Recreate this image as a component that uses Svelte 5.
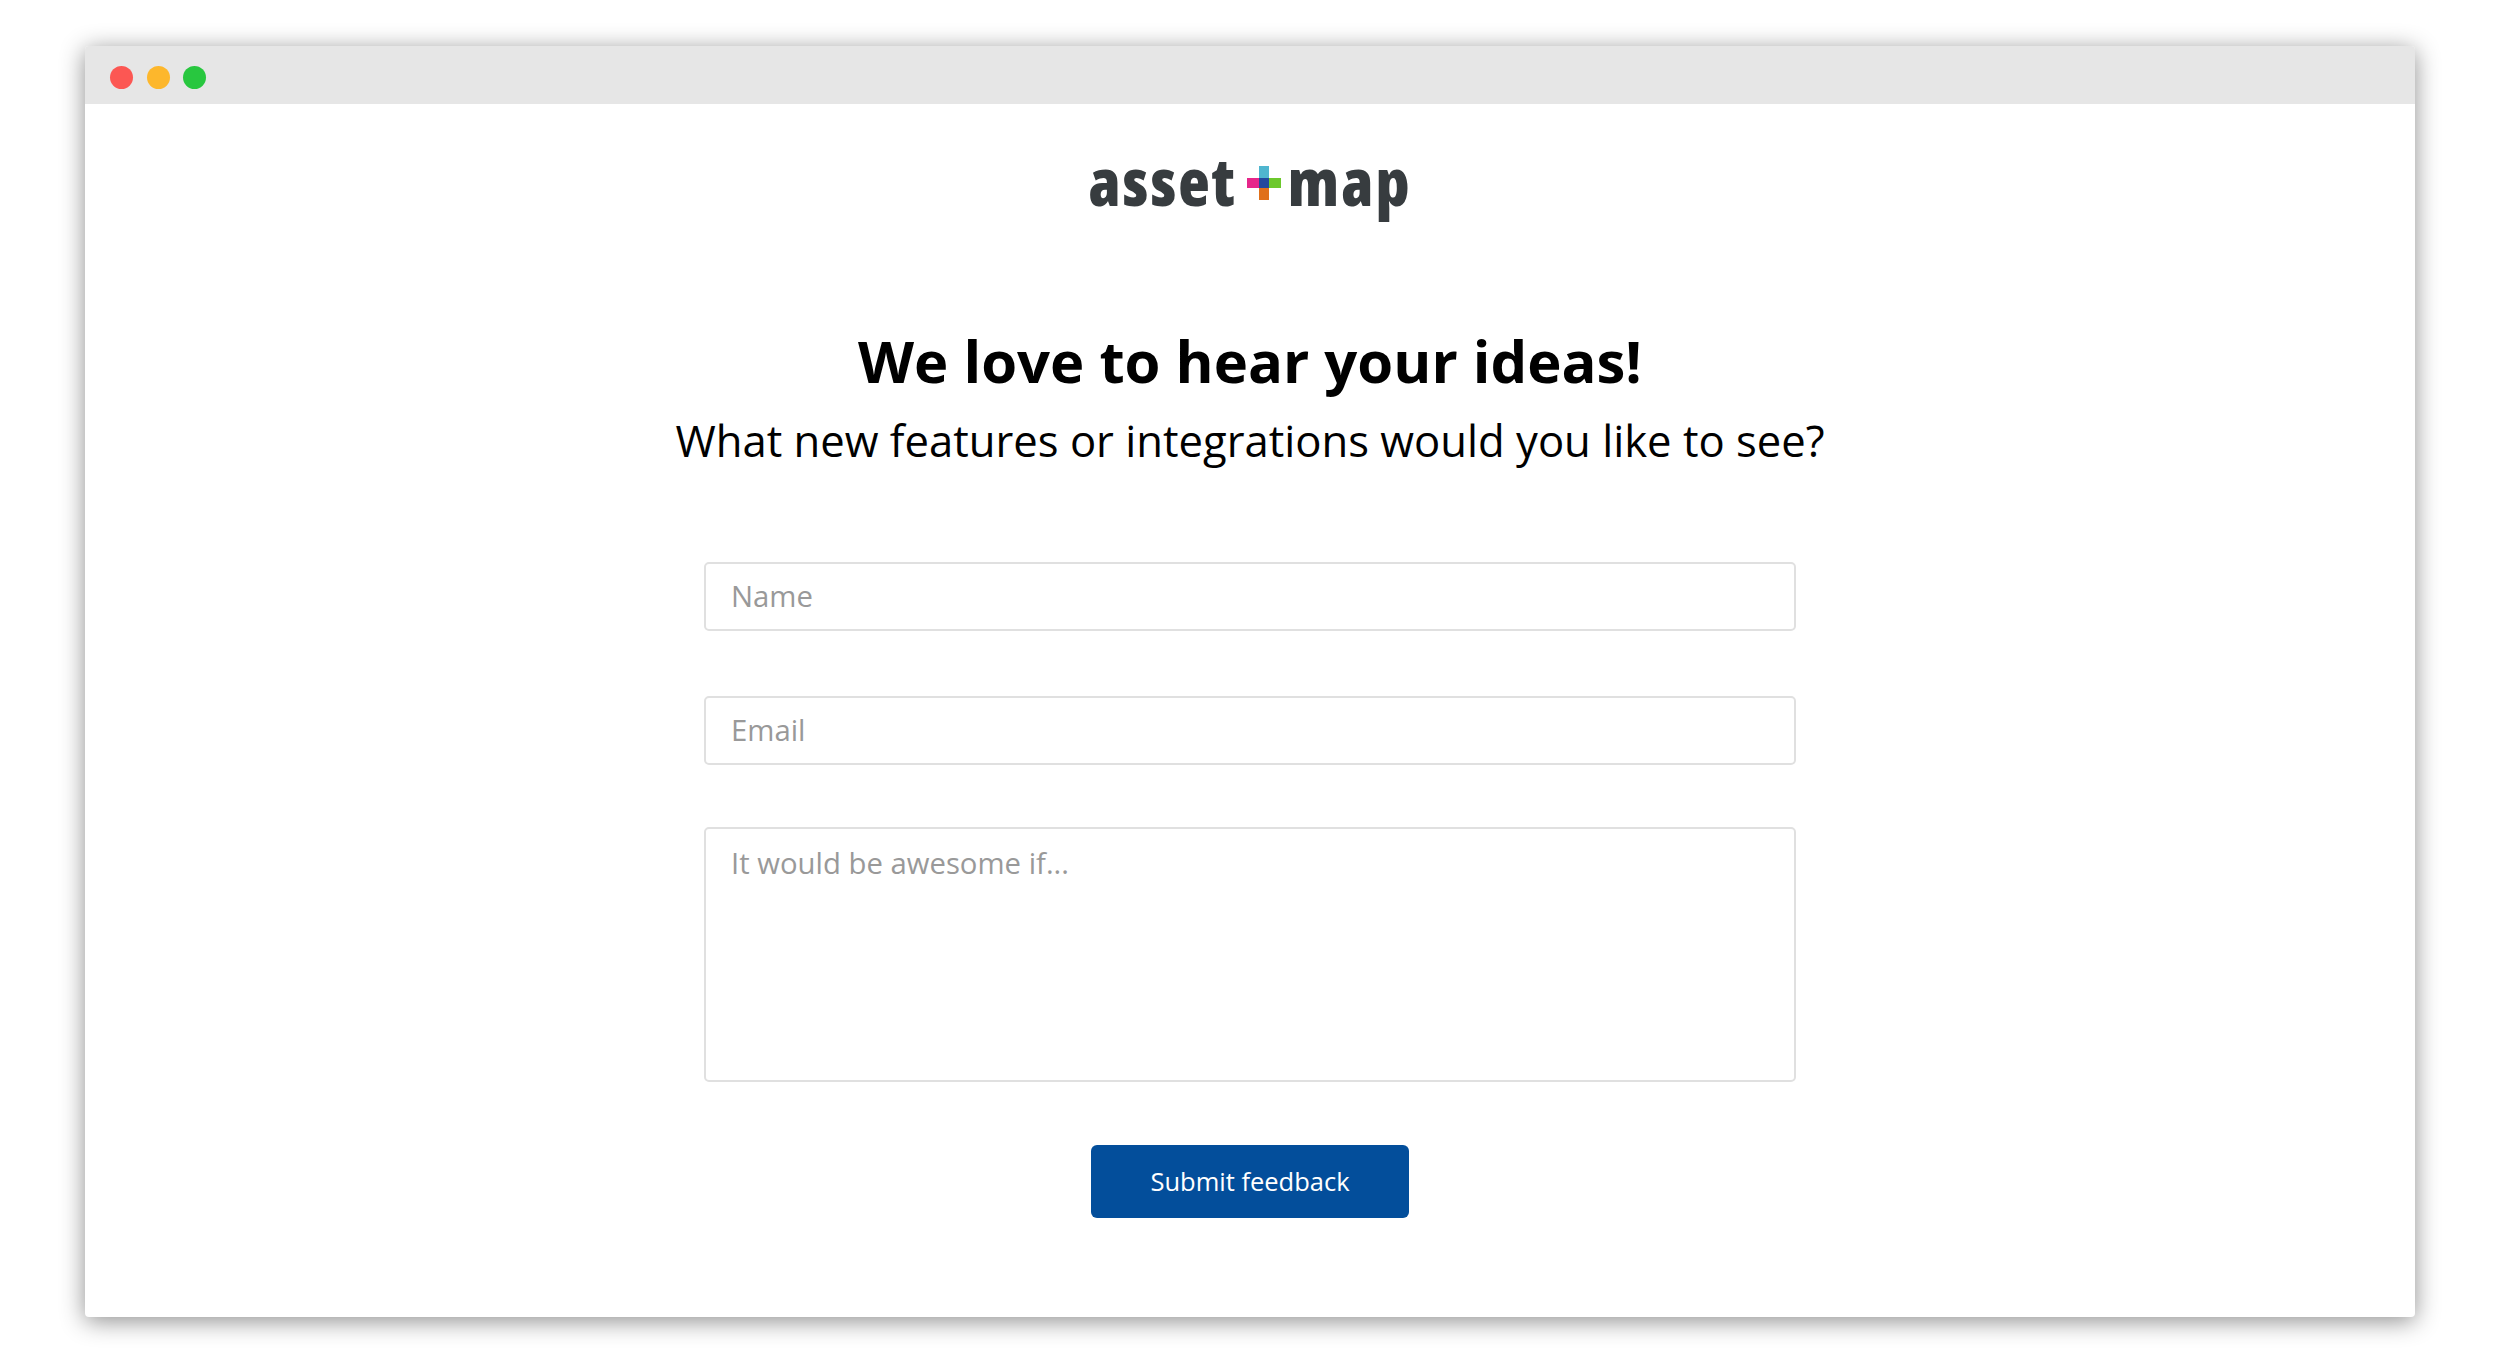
<script lang="ts">
  let name = $state('')
  let email = $state('')
  let idea = $state('')
</script>

<div class="page">
  <div class="window">
    <div class="titlebar">
      <span class="dot red"></span>
      <span class="dot yellow"></span>
      <span class="dot green"></span>
    </div>

    <div class="content">
      <div class="logo">
        <span class="word">asset</span>
        <svg class="plus" width="34" height="34" viewBox="0 0 34 34" aria-hidden="true">
          <rect x="12" y="0" width="10" height="12" fill="#4fb6cf" />
          <rect x="0" y="12" width="12" height="10" fill="#e6268a" />
          <rect x="12" y="12" width="10" height="10" fill="#22489e" />
          <rect x="22" y="12" width="12" height="10" fill="#6cc82c" />
          <rect x="12" y="22" width="10" height="12" fill="#e0701a" />
        </svg>
        <span class="word">map</span>
      </div>

      <h1>We love to hear your ideas!</h1>
      <p class="sub">What new features or integrations would you like to see?</p>

      <form class="form" onsubmit={(e) => e.preventDefault()}>
        <input type="text" placeholder="Name" bind:value={name} />
        <input type="email" placeholder="Email" bind:value={email} />
        <textarea placeholder="It would be awesome if..." bind:value={idea}></textarea>
        <button type="submit">Submit feedback</button>
      </form>
    </div>
  </div>
</div>

<style>
  :global(body) {
    margin: 0;
    background: #fff;
  }

  .page {
    padding: 46px 85px;
    font-family: "Open Sans", sans-serif;
  }

  .window {
    height: 1271px;
    background: #fff;
    border-radius: 4px;
    box-shadow: 0 4px 24px rgba(0, 0, 0, 0.45);
    overflow: hidden;
  }

  .titlebar {
    height: 58px;
    background: #e6e6e6;
    display: flex;
    align-items: center;
    gap: 13.5px;
    padding: 4px 0 0 25px;
    box-sizing: border-box;
  }

  .dot {
    width: 23px;
    height: 23px;
    border-radius: 50%;
  }

  .red { background: #fc5753; }
  .yellow { background: #fdb72c; }
  .green { background: #28c73f; }

  .content {
    display: flex;
    flex-direction: column;
    align-items: center;
  }

  .logo {
    display: flex;
    align-items: center;
    gap: 7px;
    height: 84px;
    margin-top: 35px;
    font-family: "Open Sans", sans-serif;
    font-weight: 800;
    font-stretch: 75%;
    font-size: 65px;
    letter-spacing: 2.1px;
    color: #373c3f;
  }

  .plus {
    margin: 4px 0 0 3px;
  }

  h1 {
    margin: 98px 0 0;
    font-size: 58px;
    line-height: 80px;
    font-weight: 700;
    color: #000;
  }

  .sub {
    margin: 9px 0 0;
    font-size: 43.6px;
    line-height: 60px;
    color: #000;
  }

  .form {
    width: 1092px;
    margin-top: 92px;
    display: flex;
    flex-direction: column;
    align-items: center;
  }

  input,
  textarea {
    display: block;
    width: 100%;
    box-sizing: border-box;
    border: 2px solid #e0e0e0;
    border-radius: 5px;
    padding: 0 25px;
    font-family: "Open Sans", sans-serif;
    font-size: 29.3px;
    color: #333;
    background: #fff;
    outline: none;
  }

  input {
    height: 69px;
    margin-bottom: 65px;
    padding-bottom: 2px;
  }

  input:nth-of-type(2) {
    margin-bottom: 62px;
  }

  textarea {
    height: 255px;
    padding-top: 14px;
    line-height: 40px;
    resize: none;
  }

  input::placeholder,
  textarea::placeholder {
    color: #999;
    opacity: 1;
  }

  button {
    width: 318px;
    height: 73px;
    margin-top: 63px;
    padding-bottom: 2px;
    border: none;
    border-radius: 6px;
    background: #034e9b;
    color: #fff;
    font-family: "Open Sans", sans-serif;
    font-size: 25.5px;
    font-weight: 500;
  }
</style>
